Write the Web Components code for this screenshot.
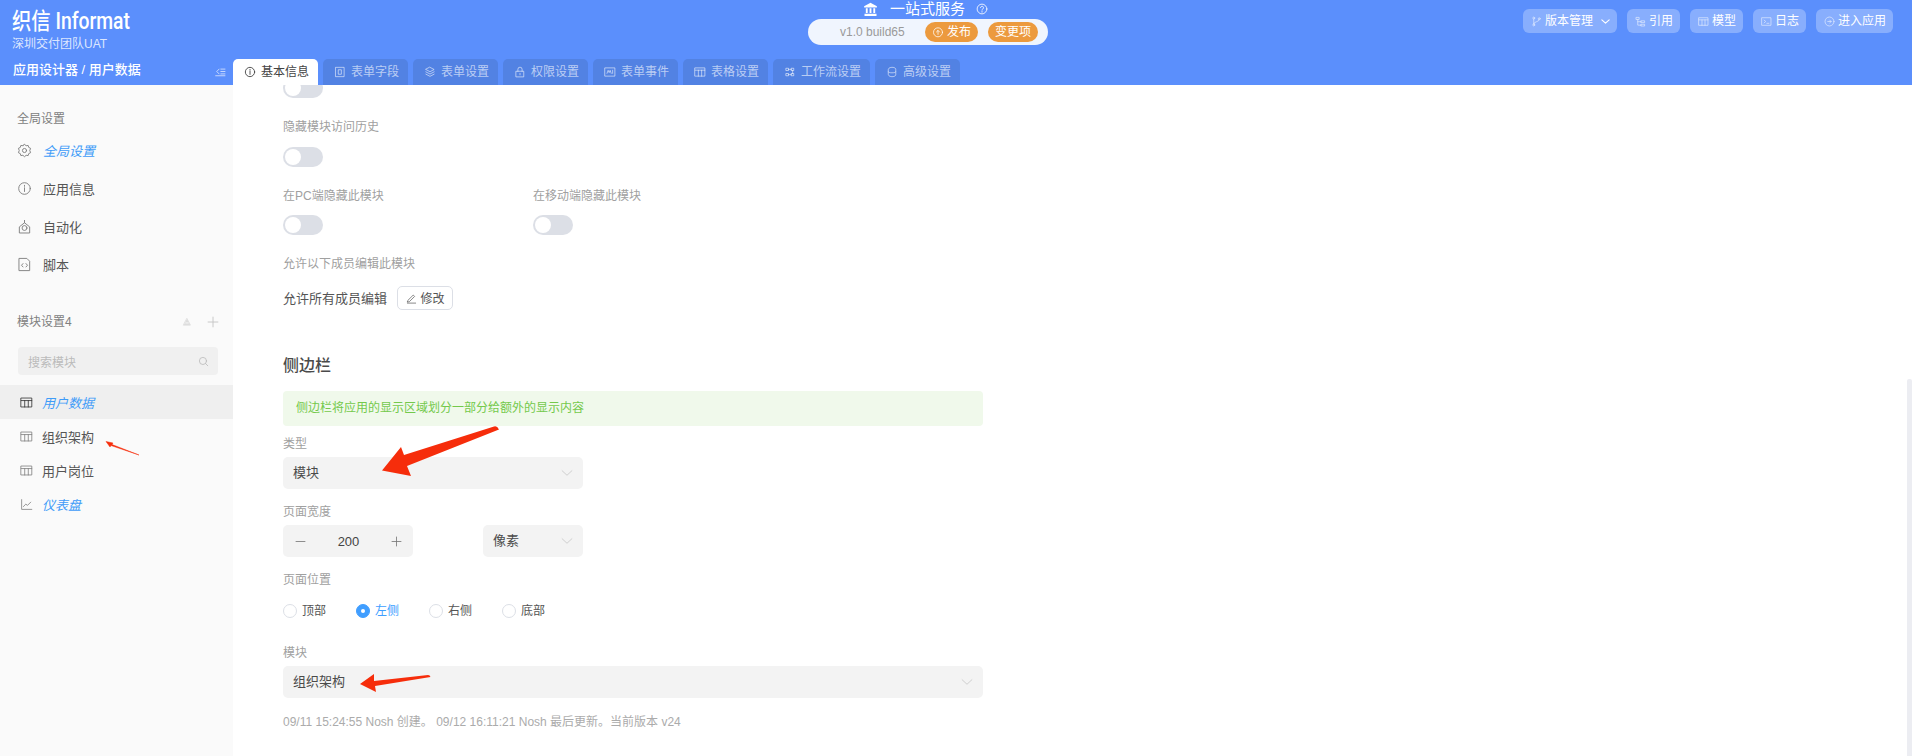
<!DOCTYPE html>
<html lang="zh">
<head>
<meta charset="utf-8">
<title>应用设计器</title>
<style>
html,body{margin:0;padding:0;height:100%;overflow:hidden;background:#fff}
body{font-family:"Liberation Sans","Noto Sans CJK SC",sans-serif;font-size:12px;color:#444}
</style>
</head>
<body>
<app-shell></app-shell>
<script>
const ICONS = {
  info:'<circle cx="8" cy="8" r="6.2"/><path d="M8 7.2v4M8 4.6v1.1"/>',
  gear:'<path d="M8 1.4l1.7 1.5 2.2-.3.6 2.1 2 1-.9 2.3.9 2.3-2 1-.6 2.1-2.2-.3L8 14.6l-1.7-1.5-2.2.3-.6-2.1-2-1 .9-2.3-.9-2.3 2-1 .6-2.1 2.2.3z"/><circle cx="8" cy="8" r="2.2"/>',
  auto:'<path d="M2.5 14.5V8.4L8 4l5.5 4.4v6.1z"/><path d="M8 1.5V4"/><circle cx="8" cy="9.6" r="2.6"/>',
  script:'<path d="M2.5 1.5h8l3 3v10h-11z"/><path d="M6.4 7L4.8 8.8l1.6 1.8M9.6 7l1.6 1.8-1.6 1.8"/>',
  table:'<path d="M1.5 2.5h13v11h-13zM1.5 5.6h13M5.8 5.6v7.9M10.2 5.6v7.9"/>',
  chart:'<path d="M2 2v12h12.5"/><path d="M4.2 10.5l3-3 2 1.6 4-4"/>',
  search:'<circle cx="7.2" cy="7.2" r="5.2"/><path d="M11 11l3.2 3.2"/>',
  plus:'<path d="M8 1.5v13M1.5 8h13"/>',
  minus:'<path d="M1.5 8h13"/>',
  chev:'<path d="M1.5 5l6.5 6 6.5-6"/>',
  edit:'<path d="M3 10.5L10.5 3l2 2L5 12.5l-2.6.6zM2 14.7h12"/>',
  form:'<path d="M2.5 1.8h11v12.4h-11z"/><path d="M6.2 5h3.6v6H6.2z"/>',
  layers:'<path d="M8 1.8l5.5 2.9L8 7.6 2.5 4.7z"/><path d="M2.5 7.8L8 10.7l5.5-2.9M2.5 10.9L8 13.8l5.5-2.9"/>',
  lock:'<path d="M3 7h10v7.5H3zM5.2 7V4.4a2.8 2.8 0 0 1 5.6 0V7M8 9.8v2"/>',
  event:'<path d="M1.5 2.5h13v11h-13z"/><path d="M4 9.8l1.5-4 1.4 3 1.3-3 1.4 4M11.5 5.6v4.2"/>',
  flow:'<path d="M3 3h3v3H3zM10 3h3v3h-3zM3 10h3v3H3zM10 10h3v3h-3zM6 4.5h4M6 11.5h4M11.5 6v4"/>',
  db:'<path d="M3 4.4c0-3.6 10-3.6 10 0v7.2c0 3.6-10 3.6-10 0zM3 8c0 1.6 10 1.6 10 0"/>',
  branch:'<circle cx="4" cy="3" r="1.4"/><circle cx="4" cy="13" r="1.4"/><circle cx="12" cy="4" r="1.4"/><path d="M4 4.4v7.2M12 5.4C12 9 4 7.5 4 11.6"/>',
  tree:'<path d="M2 2h4v3H2zM9 7h5v2.6H9zM9 12h5v2.6H9zM4 5v8.3h5M4 8.3h5"/>',
  terminal:'<path d="M1.5 2.5h13v11h-13z"/><path d="M4.5 6l2.4 2-2.4 2M8.5 10.6h3"/>',
  enter:'<circle cx="8" cy="8" r="6.5"/><path d="M5.5 8h5M8.4 6l2 2-2 2"/>',
  upload:'<circle cx="8" cy="8.4" r="6"/><path d="M8 11.2V6M5.9 8L8 5.9 10.1 8"/>',
  help:'<circle cx="8" cy="8" r="6.5"/><path d="M6 6.2a2 2 0 1 1 3 1.8c-.7.4-1 .8-1 1.6M8 11.3v.9"/>',
  small:'<path d="M8 2.5l5.5 10.5h-11z" fill="currentColor"/><path d="M6 9.5h4" stroke="#fff"/>',
  collapse:'<path d="M6 4.5L2.5 8 6 11.5" /><path d="M8.5 4.5h6M8.5 8h6M8.5 11.5h6M1 14.2h13.5"/>',
  bank:'<path d="M8 .8L14.8 4.6v1.2H1.2V4.6z" fill="currentColor" stroke="none"/><path d="M3 6.6h2v5.2H3zM7 6.6h2v5.2H7zM11 6.6h2v5.2h-2zM1.6 12.6h12.8v2.2H1.6z" fill="currentColor" stroke="none"/>'
};

function define(name, css, html, setup){
  customElements.define(name, class extends HTMLElement{
    connectedCallback(){
      if(this.shadowRoot) return;
      const r = this.attachShadow({mode:'open'});
      const a = n => this.getAttribute(n);
      r.innerHTML = '<style>'+css+'</style>'+(typeof html==='function'?html(a,this):html);
      if(setup) setup(r,this);
    }
  });
}

define('ui-icon',
  ':host{display:inline-flex;flex:none;line-height:0}svg{display:block;fill:none;stroke:currentColor;stroke-linecap:round;stroke-linejoin:round}',
  a=>{const s=a('size')||14;return `<svg width="${s}" height="${s}" viewBox="0 0 16 16" stroke-width="${a('sw')||1.2}">${ICONS[a('name')]}</svg>`});

/* ---------- header ---------- */
define('top-btn',
  `:host{display:inline-flex;align-items:center;height:24px;box-sizing:border-box;padding:0 7px 0 8px;gap:3px;background:rgba(255,255,255,.28);border-radius:6px;color:#fff;font-size:12px;line-height:24px;white-space:nowrap}
   ui-icon{opacity:.75}`,
  a=>`<ui-icon name="${a('icon')}" size="11" sw="1"></ui-icon><slot></slot>`);

define('pub-btn',
  `:host{display:inline-flex;align-items:center;justify-content:center;gap:3px;height:20px;background:#ec9a3e;border-radius:10px;color:#fff;font-size:12px;line-height:20px;white-space:nowrap;box-sizing:border-box}`,
  `<slot name="icon"></slot><slot></slot>`);

define('nav-tab',
  `:host{display:inline-flex;align-items:center;gap:5px;height:26px;box-sizing:border-box;padding:0 9px 0 11px;border-radius:5px 5px 0 0;background:#5282e3;color:rgba(255,255,255,.62);font-size:12px;line-height:26px;white-space:nowrap;flex:none}
   :host([active]){background:#fff;color:#444}`,
  a=>`<ui-icon name="${a('icon')}" size="12"></ui-icon><slot></slot>`);

define('app-header',
  `:host{display:block;height:85px;background:#5b8ffc;color:#fff;position:relative;font-size:12px}
   .wrap{display:grid;grid-template-columns:233px 1fr;grid-template-rows:59px 26px;height:85px}
   .brand{padding:10px 0 0 12px;line-height:1}
   .logo{display:block;font-family:"Roboto","Noto Sans CJK SC",sans-serif;font-size:23px;line-height:23px;font-weight:500;transform:scaleX(.84);transform-origin:left center;white-space:nowrap}
   .team{display:block;margin-top:4px;font-size:12px;line-height:14px;color:rgba(255,255,255,.8)}
   .mid{position:relative;display:flex;flex-direction:column;align-items:center}
   .title{display:flex;align-items:center;height:16px;padding:1px 5px 0 0;font-size:15px;line-height:16px;color:#fff}
   .title .t{margin:0 11px 0 12px}
   .pill{display:flex;align-items:center;margin-top:2px;width:240px;height:26px;background:#f0f5fe;border-radius:13px;box-sizing:border-box;padding:0 10px 0 32px}
   .ver{color:#9a9a9a;font-size:12px;width:85px;white-space:nowrap}
   .pub{width:53px}
   .chg{width:50px;margin-left:10px}
   .rt{position:absolute;top:9px;right:19px;display:flex;gap:10px}
   .crumb{display:flex;align-items:center;justify-content:space-between;padding:0 7px 0 13px;font-size:13px;font-weight:500;line-height:20px;white-space:nowrap;margin-top:-5px;height:31px}
   .crumb ui-icon{opacity:.85;margin-top:3px}
   .tabs{display:flex;gap:5px}
   .mid-col{position:absolute;left:808px;top:0}
  `,
  `<div class="wrap">
     <div class="brand"><span class="logo">织信 Informat</span><span class="team">深圳交付团队UAT</span></div>
     <div></div>
     <div class="crumb"><span>应用设计器 / 用户数据</span><ui-icon name="collapse" size="11" sw="1.1"></ui-icon></div>
     <div class="tabs">
       <nav-tab icon="info" active>基本信息</nav-tab>
       <nav-tab icon="form">表单字段</nav-tab>
       <nav-tab icon="layers">表单设置</nav-tab>
       <nav-tab icon="lock">权限设置</nav-tab>
       <nav-tab icon="event">表单事件</nav-tab>
       <nav-tab icon="table">表格设置</nav-tab>
       <nav-tab icon="flow">工作流设置</nav-tab>
       <nav-tab icon="db">高级设置</nav-tab>
     </div>
   </div>
   <div class="mid-col mid">
     <div class="title"><ui-icon name="bank" size="15"></ui-icon><span class="t">一站式服务</span><ui-icon name="help" size="12" sw="1.1"></ui-icon></div>
     <div class="pill"><span class="ver">v1.0 build65</span>
       <pub-btn class="pub"><ui-icon slot="icon" name="upload" size="12" sw="1"></ui-icon>发布</pub-btn>
       <pub-btn class="chg">变更项</pub-btn></div>
   </div>
   <div class="rt">
     <top-btn icon="branch">版本管理<ui-icon name="chev" size="9" sw="2" style="opacity:1;margin-left:5px"></ui-icon></top-btn>
     <top-btn icon="tree">引用</top-btn>
     <top-btn icon="table">模型</top-btn>
     <top-btn icon="terminal">日志</top-btn>
     <top-btn icon="enter">进入应用</top-btn>
   </div>`);

/* ---------- sidebar ---------- */
define('side-item',
  `:host{display:flex;align-items:center;height:var(--h,38px);padding-left:var(--pl,17px);gap:var(--g,11px);font-size:13px;color:#555;white-space:nowrap;box-sizing:border-box}
   :host([blue]) .t{color:#3f9cf8;font-style:italic}
   :host([active]){background:#efefef}
   :host([active]) ui-icon{color:#333}
   ui-icon{color:#808080}
   .t{padding-top:var(--tp,0)}`,
  a=>`<ui-icon name="${a('icon')}" size="${a('size')||15}" sw="1"></ui-icon><span class="t"><slot></slot></span>`);

define('side-bar',
  `:host{display:block;width:233px;flex:none;background:#fafafa;padding-top:24px;box-sizing:border-box;height:100%}
   .h{padding-left:17px;height:20px;line-height:20px;font-size:12px;color:#808080;display:flex;align-items:center}
   .h .a{color:#ddd;margin-left:auto}
   .h .b{color:#c4c4c4;margin:0 14px 0 15px}
   .list{margin-top:2px}
   .h2{margin-top:29px}
   .s{margin:15px 15px 0 18px;height:28px;background:#f0f0f0;border-radius:4px;display:flex;align-items:center;justify-content:space-between;padding:0 9px 0 10px;color:#bbb;font-size:12px}
   .rows{margin-top:10px;--h:34px;--pl:20px;--g:9px;--tp:1px}`,
  `<div class="h">全局设置</div>
   <div class="list">
     <side-item icon="gear" blue>全局设置</side-item>
     <side-item icon="info">应用信息</side-item>
     <side-item icon="auto">自动化</side-item>
     <side-item icon="script">脚本</side-item>
   </div>
   <div class="h h2">模块设置4<ui-icon class="a" name="small" size="10"></ui-icon><ui-icon class="b" name="plus" size="12" sw="1.2"></ui-icon></div>
   <div class="s"><span>搜索模块</span><ui-icon name="search" size="11"></ui-icon></div>
   <div class="rows">
     <side-item icon="table" blue active size="13">用户数据</side-item>
     <side-item icon="table" size="13">组织架构</side-item>
     <side-item icon="table" size="13">用户岗位</side-item>
     <side-item icon="chart" blue size="13">仪表盘</side-item>
   </div>`);

/* ---------- form ---------- */
define('form-label',
  `:host{display:block;height:20px;line-height:20px;font-size:12px;color:#a0a0a0;white-space:nowrap}`,
  `<slot></slot>`);

define('toggle-switch',
  `:host{display:block;width:40px;height:20px;border-radius:10px;background:#dcdfe6;position:relative;flex:none}
   i{position:absolute;left:2px;top:2px;width:16px;height:16px;border-radius:50%;background:#fff}`,
  `<i></i>`);

define('select-box',
  `:host{display:flex;align-items:center;justify-content:space-between;height:32px;box-sizing:border-box;padding:0 10px;background:#f3f3f3;border-radius:5px;font-size:13px;color:#4a4a4a;white-space:nowrap}
   span{padding-bottom:3px}
   ui-icon{color:#c4c4c4}`,
  `<span><slot></slot></span><ui-icon name="chev" size="12" sw="1"></ui-icon>`);

define('number-box',
  `:host{display:flex;align-items:center;justify-content:space-between;width:130px;height:32px;box-sizing:border-box;padding:0 11px 0 12px;background:#f3f3f3;border-radius:5px;font-size:13px;color:#444}
   ui-icon{color:#777}`,
  `<ui-icon name="minus" size="11"></ui-icon><slot></slot><ui-icon name="plus" size="11"></ui-icon>`);

define('radio-opt',
  `:host{display:inline-flex;align-items:center;gap:5px;font-size:12px;line-height:20px;color:#555;white-space:nowrap;width:73px}
   i{width:14px;height:14px;box-sizing:border-box;border-radius:50%;border:1px solid #dcdfe6;background:#fff;position:relative;flex:none}
   :host([on]){color:#409eff}
   :host([on]) i{background:#409eff;border-color:#409eff}
   :host([on]) i::after{content:"";position:absolute;left:4px;top:4px;width:4px;height:4px;border-radius:50%;background:#fff}`,
  `<i></i><slot></slot>`);

define('edit-btn',
  `:host{display:inline-flex;align-items:center;justify-content:center;gap:5px;width:56px;height:24px;box-sizing:border-box;border:1px solid #dcdfe6;border-radius:5px;background:#fff;font-size:12px;color:#555;white-space:nowrap}
   span{padding-bottom:1px;margin-left:-1px}`,
  `<ui-icon name="edit" size="11" sw="1"></ui-icon><span><slot></slot></span>`);

define('form-panel',
  `:host{display:block;flex:1;min-width:0;height:100%;overflow:hidden;background:#fff;padding-left:50px;box-sizing:border-box;position:relative}
   .col{display:flex;flex-direction:column;width:700px}
   .two{display:flex}
   .two>div{width:250px}
   .row{display:flex;align-items:center;height:24px;gap:10px;font-size:13px;color:#555;white-space:nowrap}
   .row>span{padding-bottom:2px}
   h3{margin:44px 0 0;font-size:16px;font-weight:500;line-height:24px;height:24px;color:#4a4a4a}
   .alert{margin-top:13px;height:35px;line-height:35px;padding-left:13px;background:#f0f9eb;border-radius:4px;color:#74c94c;font-size:12px;white-space:nowrap}
   .w{display:flex;margin-top:3px;gap:70px}
   .foot{margin-top:14px;height:20px;line-height:20px;font-size:12px;color:#ababab;white-space:nowrap}
   .rad{display:flex;margin-top:11px;height:20px}
   .bar{position:absolute;right:0;top:294px;bottom:0;width:5px;background:#ecedf2;border-radius:2px 2px 0 0}`,
  `<div class="col">
     <toggle-switch style="margin-top:-7px"></toggle-switch>
     <form-label style="margin-top:19px">隐藏模块访问历史</form-label>
     <toggle-switch style="margin-top:10px"></toggle-switch>
     <div class="two" style="margin-top:19px">
       <div><form-label>在PC端隐藏此模块</form-label><toggle-switch style="margin-top:9px"></toggle-switch></div>
       <div><form-label>在移动端隐藏此模块</form-label><toggle-switch style="margin-top:9px"></toggle-switch></div>
     </div>
     <form-label style="margin-top:19px">允许以下成员编辑此模块</form-label>
     <div class="row" style="margin-top:12px"><span>允许所有成员编辑</span><edit-btn>修改</edit-btn></div>
     <h3>侧边栏</h3>
     <div class="alert">侧边栏将应用的显示区域划分一部分给额外的显示内容</div>
     <form-label style="margin-top:8px">类型</form-label>
     <select-box style="margin-top:3px;width:300px">模块</select-box>
     <form-label style="margin-top:13px">页面宽度</form-label>
     <div class="w"><number-box>200</number-box><select-box style="width:100px">像素</select-box></div>
     <form-label style="margin-top:13px">页面位置</form-label>
     <div class="rad"><radio-opt>顶部</radio-opt><radio-opt on>左侧</radio-opt><radio-opt>右侧</radio-opt><radio-opt>底部</radio-opt></div>
     <form-label style="margin-top:22px">模块</form-label>
     <select-box style="margin-top:3px">组织架构</select-box>
     <div class="foot">09/11 15:24:55 Nosh 创建。 09/12 16:11:21 Nosh 最后更新。当前版本 v24</div>
   </div>
   <div class="bar"></div>`);

/* ---------- annotation arrows: hand-drawn marks lying over the page ---------- */
define('ann-arrows',
  `:host{position:absolute;left:0;top:0;width:1912px;height:756px;pointer-events:none}
   svg{display:block}`,
  `<svg width="1912" height="756" viewBox="0 0 1912 756">
     <path d="M499 429.5Q497 425.5 494 426.5L404 455L401 447L382 470.5L411 476L407 466Z" fill="#f62d0b"/>
     <path d="M430.5 677Q430 675 428 675L374 681L374 674L360 684L376 692L375 686Z" fill="#f62d0b"/>
     <path d="M139 455L112 444.5L113 443L106 441.5L110 447L111 445.5Z" fill="#f62d0b" stroke="#f62d0b" stroke-width=".5"/>
   </svg>`);

define('app-shell',
  `:host{display:flex;flex-direction:column;width:1912px;height:756px;position:relative;overflow:hidden}
   .body{display:flex;flex:1;min-height:0}`,
  `<app-header></app-header><div class="body"><side-bar></side-bar><form-panel></form-panel></div><ann-arrows></ann-arrows>`);
</script>
</body>
</html>
